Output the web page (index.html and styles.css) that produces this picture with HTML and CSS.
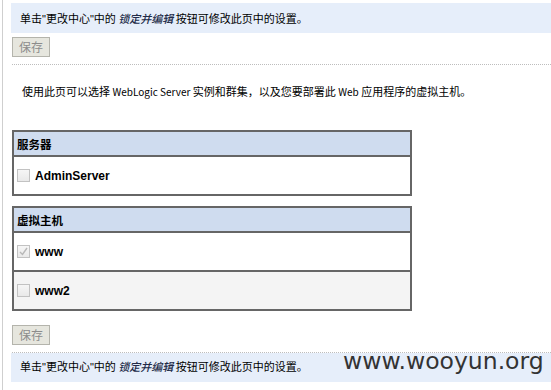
FILE: index.html
```html
<!DOCTYPE html>
<html lang="zh-CN">
  <head>
    <meta charset="UTF-8" />
    <title>部署目标</title>
    <link rel="stylesheet" href="styles.css">
  </head>
  <body>
    <div class="page">
      <div class="notice">
        单击<span class="q">"</span>更改中心<span class="q">"</span>中的 <em>锁定并编辑</em> 按钮可修改此页中的设置。
      </div>
      <button class="save-button" disabled>保存</button>
      <div class="divider"></div>

      <p class="intro">
        使用此页可以选择 <span class="latin">WebLogic Server</span> 实例和群集，以及您要部署此 <span class="latin">Web</span> 应用程序的虚拟主机。
      </p>

      <table class="target-table">
        <tr><th>服务器</th></tr>
        <tr>
          <td>
            <label class="option"><span class="check"></span>AdminServer</label>
          </td>
        </tr>
      </table>

      <table class="target-table">
        <tr><th>虚拟主机</th></tr>
        <tr>
          <td>
            <label class="option">
              <span class="check checked">
                <svg viewBox="0 0 13 13" width="13" height="13"><path d="M3 7 L5.5 9.5 L10 3" fill="none" stroke="#b8b8b8" stroke-width="1.4"/></svg>
              </span>www
            </label>
          </td>
        </tr>
        <tr class="alt">
          <td>
            <label class="option"><span class="check"></span>www2</label>
          </td>
        </tr>
      </table>

      <button class="save-button bottom" disabled>保存</button>
      <div class="divider"></div>
      <div class="notice footer">
        单击<span class="q">"</span>更改中心<span class="q">"</span>中的 <em>锁定并编辑</em> 按钮可修改此页中的设置。
        <span class="watermark">www.wooyun.org</span>
      </div>
    </div>
  </body>
</html>
```

FILE: styles.css
```css
* {
  margin: 0;
  padding: 0;
  box-sizing: border-box;
}

body {
  font-family: "Noto Sans CJK SC", "Liberation Sans", sans-serif;
  font-size: 11px;
  color: #000;
  background-color: #fff;
  height: 390px;
  overflow: hidden;
}

.page {
  margin-left: 2px;
  border-left: 1px solid #cfcfcf;
  padding: 3px 0 0 9px;
  height: 390px;
}

.notice {
  margin-left: -1px;
  height: 30px;
  line-height: 30px;
  padding-left: 9px;
  background-color: #e6eefa;
  white-space: nowrap;
}

.notice em {
  font-style: italic;
  font-weight: 500;
  color: #222b48;
}

.q {
  font-family: "Liberation Sans", sans-serif;
  font-size: 11px;
}

.latin {
  font-size: 10px;
}

.notice.footer {
  position: relative;
  height: 29px;
  line-height: 27px;
}

.watermark {
  position: absolute;
  left: 332px;
  top: -7px;
  font-family: "DejaVu Sans", sans-serif;
  font-size: 23.5px;
  line-height: 30px;
  color: #333;
}

.save-button {
  display: block;
  margin-top: 4px;
  width: 38px;
  height: 20px;
  font-family: inherit;
  font-size: 12px;
  line-height: 18px;
  color: #8c8c8c;
  background-color: #e6e6de;
  border: 1px solid #b4b4ac;
}

.save-button.bottom {
  margin-top: 14px;
}

.divider {
  margin-top: 7px;
  border-top: 1px dotted #bdbdbd;
}

.intro {
  padding: 17px 0 0 10px;
  height: 65px;
  line-height: 18px;
  white-space: nowrap;
}

.target-table {
  width: 400px;
  border-collapse: collapse;
  border: 2px solid #666;
  margin-bottom: 10px;
}

.target-table th {
  height: 25px;
  padding: 1px 0 0 3px;
  text-align: left;
  font-size: 11.5px;
  font-weight: bold;
  background-color: #cfdcef;
  border-bottom: 2px solid #666;
}

.target-table td {
  height: 39px;
  padding: 0 0 0 3px;
  border-bottom: 2px solid #666;
  background-color: #fff;
}

.target-table tr.alt td {
  background-color: #f4f4f4;
}

.option {
  display: flex;
  align-items: center;
  gap: 5px;
  font-family: "Liberation Sans", sans-serif;
  font-size: 12px;
  font-weight: bold;
}

.check {
  display: block;
  width: 13px;
  height: 13px;
  border: 1px solid #c2c2c2;
  background: linear-gradient(#f6f6f6, #e9e9e9);
}

.check svg {
  display: block;
  margin: -1px;
}
```
